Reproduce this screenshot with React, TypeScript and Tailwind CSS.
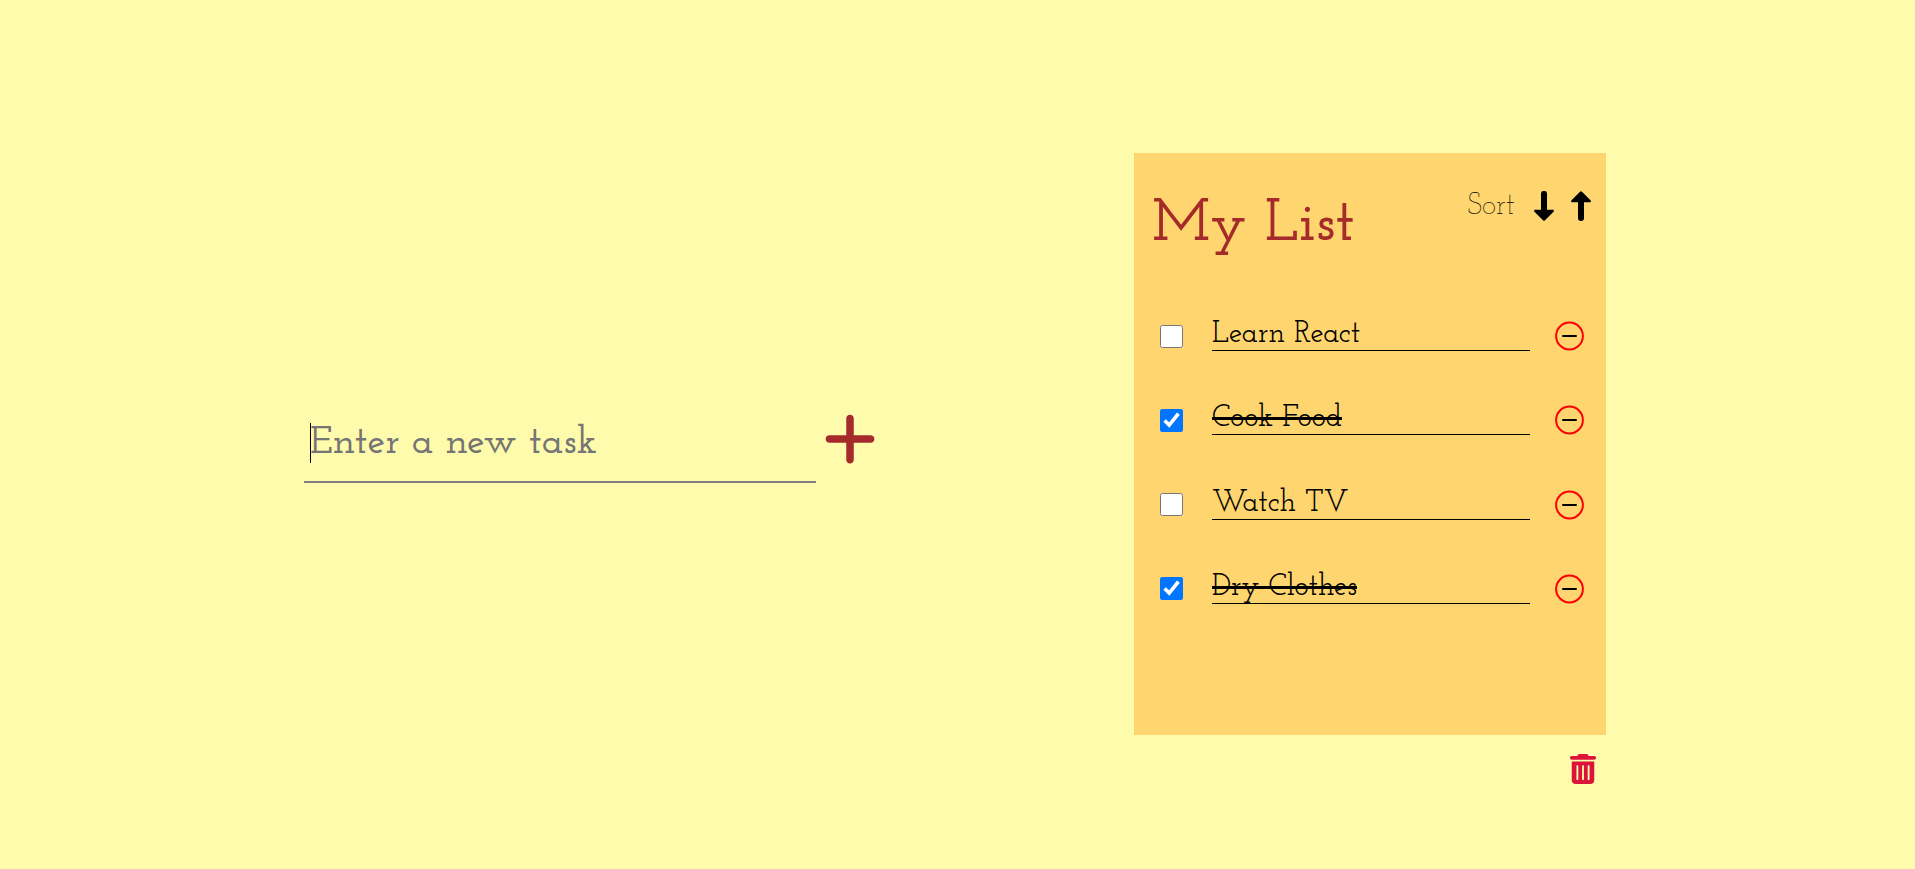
import { useState } from "react";
import { FaPlus, FaTrashCan } from "react-icons/fa6";

type Task = { id: number; title: string; done: boolean };

const initialTasks: Task[] = [
  { id: 1, title: "Learn React", done: false },
  { id: 2, title: "Cook Food", done: true },
  { id: 3, title: "Watch TV", done: false },
  { id: 4, title: "Dry Clothes", done: true },
];

function RemoveIcon() {
  return (
    <svg viewBox="0 0 30 30" className="size-[30px]" fill="none" aria-hidden="true">
      <circle cx="15.500" cy="15" r="13.4" stroke="#ff0000" strokeWidth="2" />
      <path d="M9 15h13" stroke="#000000" strokeWidth="2" strokeLinecap="round" />
    </svg>
  );
}

function ArrowIcon({ up = false }: { up?: boolean }) {
  return (
    <svg
      viewBox="0 0 30 30"
      className={up ? "size-[30px] rotate-180" : "size-[30px]"}
      fill="currentColor"
      aria-hidden="true"
    >
      <path d="M12 2.400Q12 0 14.500 0h1q2.500 0 2.500 2.400V18.800h5.800c1.100 0 1.400 1.200.7 1.900L16 29.300q-1 1-2 0L5.500 20.700c-.7-.7-.4-1.900.7-1.900H12z" />
    </svg>
  );
}

function TaskForm({ onAdd }: { onAdd: (title: string) => void }) {
  const [title, setTitle] = useState("");
  return (
    <form
      className="flex items-center gap-1"
      onSubmit={(e) => {
        e.preventDefault();
        if (title.trim()) onAdd(title.trim());
        setTitle("");
      }}
    >
      <div className="relative">
        <input
          type="text"
          aria-label="New task"
          placeholder="Enter a new task"
          value={title}
          onChange={(e) => setTitle(e.target.value)}
          className="block h-[97px] w-[512px] border-b-2 border-[#808080] bg-transparent px-1.5 pt-[18px] text-[40px] font-semibold text-black outline-none placeholder:text-[#757575]"
        />
        {title === "" && <span className="absolute left-1.5 top-[37px] h-10 w-px bg-black" />}
      </div>
      <button type="submit" aria-label="Add task" className="pt-2 text-[60px] text-[#a52a2a]">
        <FaPlus />
      </button>
    </form>
  );
}

export default function App() {
  const [tasks, setTasks] = useState(initialTasks);

  const sort = (dir: number) =>
    setTasks([...tasks].sort((a, b) => dir * a.title.localeCompare(b.title)));

  return (
    <main className="flex min-h-screen items-center justify-between bg-[#fffbac] pl-[304px] pr-[309px] font-['Josefin_Slab','Liberation_Serif',serif]">
      <TaskForm
        onAdd={(title) => setTasks([...tasks, { id: Date.now(), title, done: false }])}
      />

      <section className="flex w-[472px] flex-col self-start pt-[153px]">
        <div className="min-h-[582px] bg-[#ffd56f]">
          <header className="flex h-[141px] items-start justify-between pl-[18px] pr-[10px]">
            <h1 className="pt-9 text-[60px] font-semibold leading-[72px] text-[#a52a2a]">My List</h1>
            <div className="flex items-center gap-[7px] pt-9 text-[30px] leading-8">
              <span className="pr-[7px] pt-0.5 font-extralight text-black">Sort</span>
              <button type="button" aria-label="Sort descending" onClick={() => sort(-1)}>
                <ArrowIcon />
              </button>
              <button type="button" aria-label="Sort ascending" onClick={() => sort(1)}>
                <ArrowIcon up />
              </button>
            </div>
          </header>

          <ul className="grid min-h-[337px] auto-rows-fr">
            {tasks.map((task) => (
              <li key={task.id} className="flex items-center pl-[26px] pr-[22px]">
                <input
                  id={`task-${task.id}`}
                  type="checkbox"
                  checked={task.done}
                  onChange={() =>
                    setTasks(tasks.map((t) => (t.id === task.id ? { ...t, done: !t.done } : t)))
                  }
                  className="size-[23px] shrink-0"
                />
                <label
                  htmlFor={`task-${task.id}`}
                  className="ml-[29px] h-[30px] flex-1 border-b border-black text-[30px] font-medium leading-7 text-black"
                >
                  <span className={task.done ? "line-through decoration-[3px]" : ""}>
                    {task.title}
                  </span>
                </label>
                <button
                  type="button"
                  aria-label={`Remove ${task.title}`}
                  className="ml-6"
                  onClick={() => setTasks(tasks.filter((t) => t.id !== task.id))}
                >
                  <RemoveIcon />
                </button>
              </li>
            ))}
          </ul>
        </div>

        <button
          type="button"
          aria-label="Delete all tasks"
          className="mr-2 mt-[19px] self-end text-[30px] text-[#dc143c]"
          onClick={() => setTasks([])}
        >
          <FaTrashCan />
        </button>
      </section>
    </main>
  );
}
